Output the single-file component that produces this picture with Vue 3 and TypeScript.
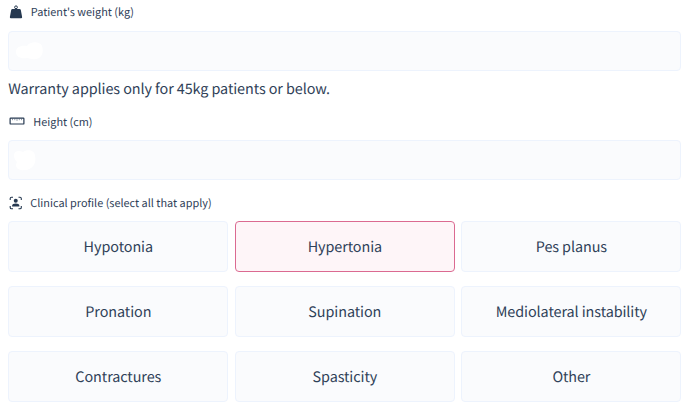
<script setup lang="ts">
import { ref } from 'vue'

const options: string[] = [
  'Hypotonia', 'Hypertonia', 'Pes planus',
  'Pronation', 'Supination', 'Mediolateral instability',
  'Contractures', 'Spasticity', 'Other',
]
const selected = ref<string[]>(['Hypertonia'])

function toggle(option: string): void {
  selected.value = selected.value.includes(option)
    ? selected.value.filter((item) => item !== option)
    : [...selected.value, option]
}
</script>

<template>
  <main class="form">
    <div class="label weight-label">
      <svg class="icon weight-icon" viewBox="0 0 14 14">
        <circle cx="7" cy="2.300" r="1.400" fill="none" stroke="currentColor" stroke-width="1" />
        <path d="M3.400 4h7.200q.9 0 1.200.9L13.100 12q.2 1.300-1 1.300H1.900q-1.200 0-1-1.300L2.200 4.900Q2.500 4 3.400 4Z" fill="currentColor" />
      </svg>
      <span>Patient's weight (kg)</span>
    </div>
    <div class="field">
      <svg class="value" viewBox="0 0 40 38">
        <path d="M7 20C7 15 12 13 18 14C21 9 31 9 33 14C35 20 33 26 27 27C23 28 21 26 18 26C12 27 7 25 7 20Z" />
      </svg>
    </div>
    <p class="note">Warranty applies only for 45kg patients or below.</p>
    <div class="label height-label">
      <svg class="icon ruler-icon" viewBox="0 0 16 8">
        <rect x="1.100" y="1.100" width="13.800" height="5.900" rx=".6" fill="none" stroke="currentColor" stroke-width="1.200" />
        <path d="M3.500 1.700v1.500M5.800 1.700v1.500M8 1.700v2.200M10.300 1.700v1.500M12.500 1.700v1.500" stroke="currentColor" stroke-width=".5" />
      </svg>
      <span>Height (cm)</span>
    </div>
    <div class="field">
      <svg class="value" viewBox="0 0 40 38">
        <path d="M5 14C5 10 10 9 14 11C18 8 26 9 26 15C28 22 23 29 16 29C9 30 5 26 8 21C6 19 5 17 5 14Z" />
      </svg>
    </div>
    <div class="label profile-label">
      <svg class="icon profile-icon" viewBox="0 0 14 14">
        <path d="M1.200 4V2.500Q1.200 1.200 2.500 1.200H4M9.500 1.200h1.500q1.300 0 1.300 1.300V4M12.300 10v1.500q0 1.300-1.300 1.300H9.500M4 12.800H2.500q-1.300 0-1.300-1.300V10" fill="none" stroke="currentColor" stroke-width="1.100" />
        <circle cx="6.750" cy="4.800" r="2" fill="currentColor" />
        <path d="M3.100 10.600V9.700C3.100 8.200 4.700 7.400 6.750 7.400s3.650.8 3.650 2.300v.9Z" fill="currentColor" />
      </svg>
      <span>Clinical profile (select all that apply)</span>
    </div>
    <div class="options">
      <button
        v-for="option in options"
        :key="option"
        type="button"
        class="option"
        :class="{ selected: selected.includes(option) }"
        @click="toggle(option)"
      >{{ option }}</button>
    </div>
  </main>
</template>

<style>
body { background: #fff; }
</style>

<style scoped>
.form {
  box-sizing: border-box;
  width: 688px;
  height: 410px;
  padding: 0 6.600px 0 8.300px;
  overflow: hidden;
  color: #2f4158;
  font-family: "Noto Sans CJK SC", "Noto Sans", sans-serif;
  text-rendering: geometricPrecision;
}
.label {
  display: flex;
  align-items: center;
  box-sizing: border-box;
  font-size: 10.900px;
  line-height: 18px;
  white-space: nowrap;
}
.icon { display: block; flex: none; color: #263951; }
.weight-label { height: 31px; padding: 3px 0 10px 1px; gap: 7.500px; }
.weight-icon { width: 14px; height: 14px; }
.height-label { height: 40px; padding: 13px 0 0 .7px; gap: 8.300px; align-items: flex-start; }
.ruler-icon { width: 16px; height: 8px; margin-top: 4px; }
.profile-label { height: 41px; padding: 5px 0 0 1px; gap: 7px; }
.profile-icon { width: 14px; height: 14px; }
.field {
  box-sizing: border-box;
  height: 40px;
  border: 1px solid #edf3fd;
  border-radius: 4px;
  background: #fafbfd;
}
.value { display: block; width: 40px; height: 38px; fill: #fff; }
.note { margin: 0; height: 29px; padding-top: 6px; font-size: 14.400px; line-height: 23px; letter-spacing: -.08px; box-sizing: border-box; white-space: nowrap; }
.options {
  display: grid;
  grid-template-columns: repeat(3, 1fr);
  grid-auto-rows: 51px;
  gap: 14px 6.500px;
}
.option {
  min-width: 0;
  padding: 1px 0 0;
  border: 1px solid #edf3fd;
  border-radius: 4px;
  background: #fafbfd;
  color: inherit;
  font: 14.400px/24px "Noto Sans CJK SC", "Noto Sans", sans-serif;
  letter-spacing: -.08px;
  text-rendering: geometricPrecision;
  white-space: nowrap;
}
.option.selected { border-color: #db6a91; background: #fef5f8; }
</style>
